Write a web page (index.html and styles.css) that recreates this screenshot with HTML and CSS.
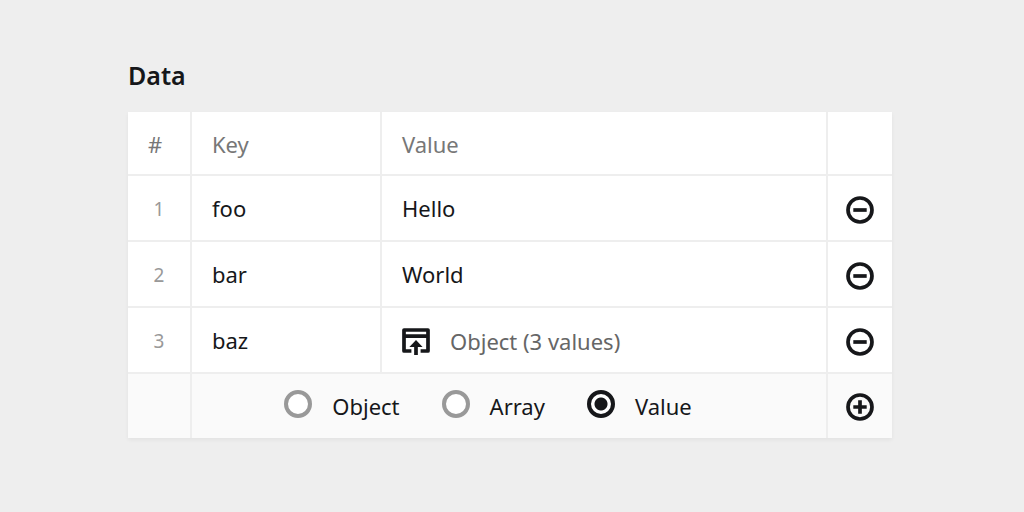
FILE: index.html
```html
<!DOCTYPE html>
<html lang="en">
<head>
<meta charset="utf-8">
<meta name="viewport" content="width=device-width, initial-scale=1">
<title>Data</title>
<link rel="stylesheet" href="styles.css">
</head>
<body>
<svg class="symbols" aria-hidden="true">
  <symbol id="remove" viewBox="0 0 28 28"><circle cx="14" cy="14" r="12"/><path d="M7.3 14h13.4"/></symbol>
  <symbol id="add" viewBox="0 0 28 28"><circle cx="14" cy="14" r="12"/><path d="M7.3 14h13.4M14 7.3v13.4"/></symbol>
  <symbol id="open" viewBox="0 0 28 28"><path stroke-linejoin="round" d="M9.4 24H2V3h24v21h-7.4M2 9.2h24M14 28V18"/><path class="solid" d="M14 13l6.6 7H7.4z"/></symbol>
</svg>
<main class="page">
  <h1 class="title" id="data-title">Data</h1>
  <table class="data" aria-labelledby="data-title">
    <colgroup>
      <col class="col-index"><col class="col-key"><col><col class="col-action">
    </colgroup>
    <thead>
      <tr><th>#</th><th>Key</th><th>Value</th><td></td></tr>
    </thead>
    <tbody>
      <tr>
        <td class="index">1</td><td>foo</td><td>Hello</td>
        <td class="action"><button type="button" class="icon-button" aria-label="Remove foo"><svg class="icon"><use href="#remove"/></svg></button></td>
      </tr>
      <tr>
        <td class="index">2</td><td>bar</td><td>World</td>
        <td class="action"><button type="button" class="icon-button" aria-label="Remove bar"><svg class="icon"><use href="#remove"/></svg></button></td>
      </tr>
      <tr>
        <td class="index">3</td><td>baz</td>
        <td><button type="button" class="object-button"><svg class="icon"><use href="#open"/></svg><span>Object (3 values)</span></button></td>
        <td class="action"><button type="button" class="icon-button" aria-label="Remove baz"><svg class="icon"><use href="#remove"/></svg></button></td>
      </tr>
    </tbody>
    <tfoot>
      <tr>
        <td></td>
        <td colspan="2">
          <div class="types" role="radiogroup" aria-label="Type">
            <label class="type"><input class="radio" type="radio" name="type" value="object"><span>Object</span></label>
            <label class="type"><input class="radio" type="radio" name="type" value="array"><span>Array</span></label>
            <label class="type"><input class="radio" type="radio" name="type" value="value" checked><span>Value</span></label>
          </div>
        </td>
        <td class="action"><button type="button" class="icon-button" aria-label="Add entry"><svg class="icon"><use href="#add"/></svg></button></td>
      </tr>
    </tfoot>
  </table>
</main>
</body>
</html>
```
FILE: styles.css
```css
* { box-sizing: border-box; }

body {
  margin: 0;
  background: #eee;
  color: #16171a;
  font: 22px/32px "Noto Sans", "Open Sans", sans-serif;
}

.page { padding: 59px 132px 60px 128px; }

.title {
  margin: 0 0 21px;
  font-size: 25px;
  font-weight: 600;
  line-height: 32px;
}

.data {
  width: 100%;
  table-layout: fixed;
  border-collapse: separate;
  border-spacing: 0;
  background: #fff;
  box-shadow: 0 2px 4px rgba(0, 0, 0, 0.05);
}

.col-index, .col-action { width: 64px; }
.col-key { width: 190px; }

.data th,
.data td {
  height: 66px;
  padding: 0 20px;
  border: 0 solid #eee;
  border-width: 0 2px 2px 0;
  font-weight: 400;
  text-align: left;
  vertical-align: middle;
}

.data tr > :last-child { border-right-width: 0; }

.data thead th,
.data thead td {
  height: 64px;
  padding-top: 2px;
  color: #777;
}

.data tfoot td {
  height: 64px;
  background: #fafafa;
  border-bottom-width: 0;
}

.data .index {
  padding: 2px 0 0;
  color: #999;
  font-size: 19px;
  text-align: center;
}

.data .action { padding: 0; }

button {
  padding: 0;
  border: 0;
  background: none;
  color: inherit;
  font: inherit;
  cursor: pointer;
}

.icon-button {
  display: flex;
  align-items: center;
  justify-content: center;
  width: 100%;
  height: 64px;
  padding-top: 4px;
}

.data tfoot .icon-button { padding-top: 2px; }

.object-button {
  display: flex;
  align-items: center;
  gap: 20px;
  padding-top: 2px;
}

.object-button span { color: #666; }

.symbols { display: none; }

.icon {
  display: block;
  flex: none;
  width: 28px;
  height: 28px;
  fill: none;
  stroke: #16171a;
  stroke-width: 3.7;
}

.solid { fill: #16171a; stroke: none; }

.types {
  display: flex;
  justify-content: center;
}

.type {
  display: flex;
  align-items: flex-start;
  gap: 20px;
  margin-right: 42px;
}

.radio {
  appearance: none;
  flex: none;
  width: 28px;
  height: 28px;
  margin: 0;
  border: 4px solid #999;
  border-radius: 50%;
  background: #fff;
}

.radio:checked {
  border-color: #16171a;
  background: radial-gradient(circle, #16171a 6px, #fff 7px);
}
```
